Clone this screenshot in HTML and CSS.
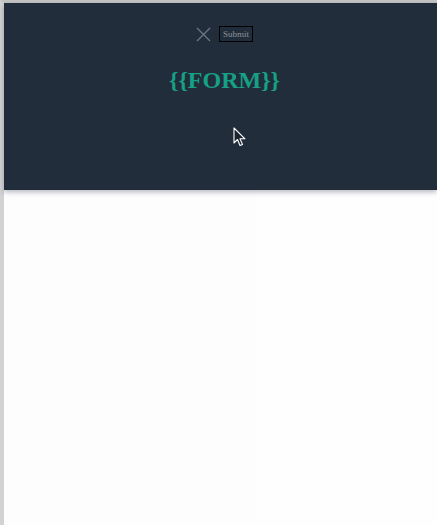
FILE: index.html
```html
<!DOCTYPE html>
<html>
<head>
<meta charset="utf-8">
<link rel="stylesheet" href="styles.css">
</head>
<body>
<div class="frame">
  <header class="header">
    <div class="toolbar">
      <svg class="close" width="15" height="15" viewBox="0 0 15 15" aria-hidden="true">
        <path d="M1 1 L14 14 M14 1 L1 14" stroke="#6b7480" stroke-width="1.4" fill="none"/>
      </svg>
      <button class="submit" type="button">Submit</button>
    </div>
    <h1 class="title">{{FORM}}</h1>
    <svg class="cursor" width="14" height="21" viewBox="0 0 14 21" aria-hidden="true">
      <path d="M1 1 L1 16 L4.5 12.5 L7 18.5 L9.5 17.5 L7 11.8 L12 11.8 Z" fill="#1b232e" stroke="#ffffff" stroke-width="1.1" stroke-linejoin="round"/>
    </svg>
  </header>
  <main class="content"></main>
</div>
</body>
</html>
```

FILE: styles.css
```css
html, body {
  margin: 0;
  padding: 0;
  height: 100%;
  background: #fefefe;
}

.frame {
  box-sizing: border-box;
  height: 100%;
  border-top: 3px solid #c4c4c4;
  border-left: 4px solid #d2d2d2;
  display: flex;
  flex-direction: column;
}

.header {
  position: relative;
  background: #222d3b;
  height: 187px;
  box-shadow: 0 2px 5px rgba(40, 50, 70, 0.35);
  display: flex;
  flex-direction: column;
  align-items: center;
  padding-left: 8px;
  box-sizing: border-box;
  z-index: 1;
}

.toolbar {
  display: flex;
  align-items: center;
  gap: 8px;
  margin-top: 23px;
}

.close {
  display: block;
}

.submit {
  font-family: "Liberation Serif", "Times New Roman", serif;
  font-size: 9px;
  color: #8d939b;
  background: #222d3b;
  border: 1px solid #000000;
  padding: 2px 3px 1px;
  line-height: 11px;
  margin: 0;
}

.title {
  font-family: "Liberation Serif", "Times New Roman", serif;
  font-weight: bold;
  font-size: 24px;
  color: #16a085;
  margin: 24px 0 0;
  line-height: 28px;
}

.cursor {
  position: absolute;
  left: 229px;
  top: 124px;
}

.content {
  flex: 1;
  background: linear-gradient(to right, #fdfdfe 0, #fdfdfe 251px, #fefefe 251px);
}
```
